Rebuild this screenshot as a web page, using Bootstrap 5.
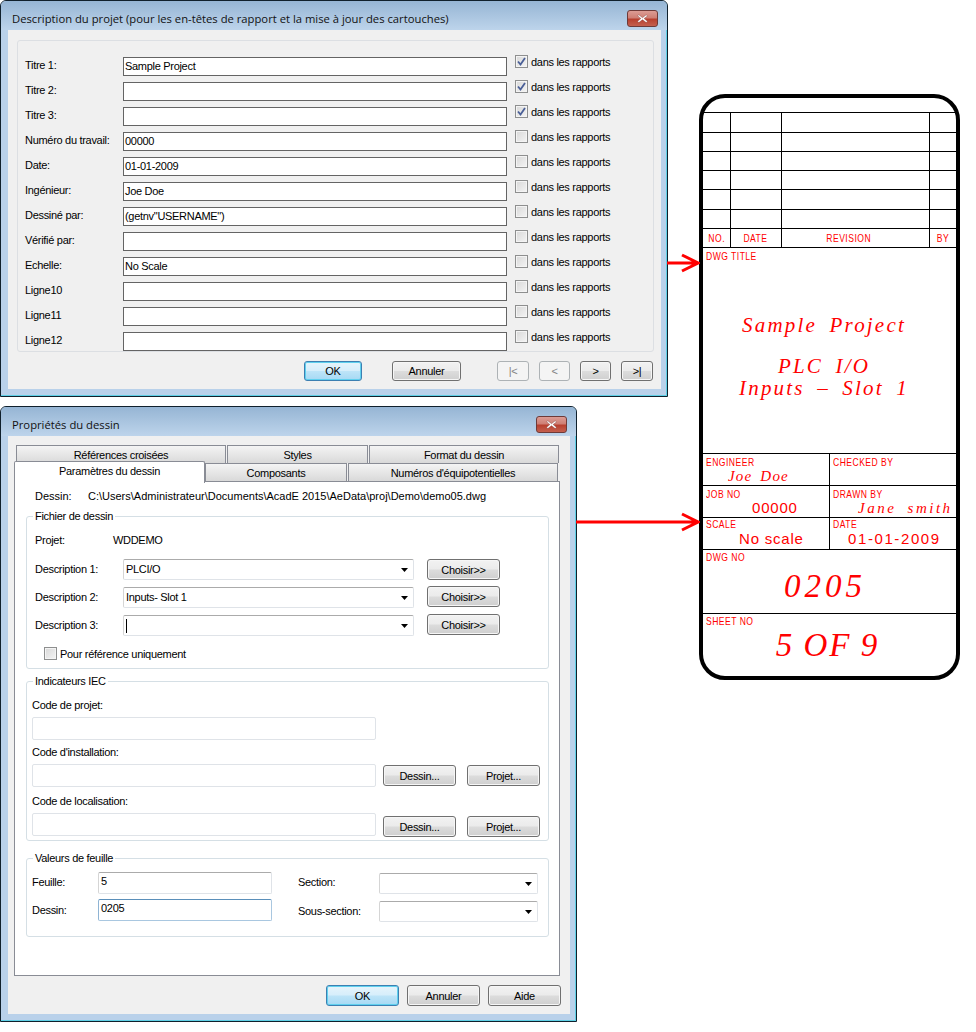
<!DOCTYPE html>
<html lang="fr">
<head>
  <meta charset="UTF-8" />
  <title>Description du projet</title>
  <meta name="viewport" content="width=device-width, initial-scale=1" />
  <link href="https://cdn.jsdelivr.net/npm/bootstrap@5.3.0/dist/css/bootstrap.min.css" rel="stylesheet" />
  <style>
    body {
      background: #fff;
      color: #000;
      font-family: "Liberation Sans", Arial, sans-serif;
      font-size: 11px;
      line-height: 14px;
      letter-spacing: -.3px;
      position: relative;
      width: 976px;
      height: 1032px;
      overflow: hidden;
    }

    /* windows on the desktop */
    .dlg {
      position: absolute;
      left: 0;
      background: #b9d1ea;
      border: 1px solid #10202c;
      border-radius: 6px 6px 0 0;
      box-shadow: inset -1px -1px 0 #5fd0e6;
      display: flex;
      flex-direction: column;
    }
    .dlg-a { top: 0; width: 668px; height: 397px; }
    .dlg-b { top: 406px; width: 577px; height: 616px; }

    .dlg-title {
      height: 29px;
      flex: none;
      display: flex;
      align-items: flex-start;
      justify-content: space-between;
      padding: 9px 9px 0 11px;
      background: linear-gradient(#96b5d4, #bdd4eb);
      border-radius: 5px 5px 0 0;
      font-family: "Open Sans", sans-serif;
      font-size: 11.25px;
      line-height: 17px;
      letter-spacing: 0;
      color: #111;
    }
    .close-x {
      width: 31px;
      height: 17px;
      border: 1px solid #6e3a38;
      border-radius: 3px;
      background: linear-gradient(#dc9c94 0, #cf7f75 45%, #b8402f 55%, #c4604f 100%);
      display: flex;
      align-items: center;
      justify-content: center;
    }

    .dlg-body {
      flex: 1;
      margin: 0 6px 7px 7px;
      background: #f0f0f0;
    }
    .dlg-a .dlg-body { padding: 10px 7px 0 9px; }

    .panel-a {
      height: 312px;
      border: 1px solid #dcdfe3;
      border-radius: 3px;
      padding: 16px 0 0 7px;
      display: flex;
      flex-direction: column;
      gap: 6px;
    }
    .row-a { display: flex; height: 19px; }
    .row-a label { width: 98px; line-height: 17px; flex: none; }
    .row-a .fld-a { width: 384px; flex: none; margin-right: 8px; }
    .fld-a {
      height: 19px;
      border: 1px solid #646464;
      background: #fff;
      padding-left: 1px;
      line-height: 17px;
    }
    .chk-line { display: flex; align-items: center; height: 13px; margin-top: -2px; gap: 3px; }
    .chk-box {
      width: 13px;
      height: 13px;
      flex: none;
      border: 1px solid #8e8f8f;
      background: linear-gradient(135deg, #d8d8d8, #f4f4f4);
      box-shadow: inset 0 0 0 1px #f4f4f4;
      display: flex;
      align-items: center;
      justify-content: center;
    }

    /* win7 push buttons */
    .btn-win {
      height: 21px;
      padding: 0;
      border: 1px solid #707070;
      border-radius: 3px;
      background: linear-gradient(#f2f2f2 0, #ebebeb 48%, #dcdcdc 52%, #cfcfcf 100%);
      color: #000;
      font-size: 11px;
      line-height: 18px;
      letter-spacing: -.3px;
      box-shadow: inset 0 0 0 1px #f6f6f6;
      flex: none;
    }
    .btn-win:hover { background: linear-gradient(#f2f2f2 0, #ebebeb 48%, #dcdcdc 52%, #cfcfcf 100%); color: #000; border-color: #707070; }
    .btn-win.is-default {
      border-color: #3c7fb1;
      background: linear-gradient(#e6f4fb 0, #d6eefb 48%, #bde4f8 52%, #a6d9f4 100%);
      box-shadow: inset 0 0 0 1px #5fd0ee;
    }
    .btn-win.is-off, .btn-win:disabled {
      border-color: #adb2b5;
      background: #f4f4f4;
      color: #838383;
      box-shadow: none;
      opacity: 1;
    }
    .w-31 { width: 31px; }
    .w-32 { width: 32px; }
    .w-58 { width: 58px; }
    .w-69 { width: 69px; }
    .w-73 { width: 73px; }

    .bar-a { display: flex; margin: 9px 0 0 287px; height: 20px; }
    .bar-a .btn-win { height: 20px; }
    .bar-a .gap-30 { margin-left: 30px; }
    .bar-a .gap-36 { margin-left: 36px; }
    .bar-a .gap-10 { margin-left: 10px; }

    /* tabs */
    .tabs-b { padding: 9px 0 0 6px; }
    .tab-row { display: flex; height: 18px; }
    .tab-row.top-row { padding-left: 2px; gap: 1px; }
    .tab-win {
      border: 1px solid #898c95;
      border-bottom: 0;
      background: linear-gradient(#f4f4f4, #d9d9d9);
      text-align: center;
      line-height: 19px;
      height: 18px;
      flex: none;
    }
    .tab-win.on {
      background: #fff;
      height: 22px;
      margin-top: -2px;
      position: relative;
      z-index: 2;
      line-height: 19px;
      border-radius: 2px 2px 0 0;
    }
    .t-a { width: 210px; }
    .t-b { width: 141px; }
    .t-c { width: 190px; }
    .t-d { width: 191px; }
    .t-e { width: 142px; }
    .t-f { width: 210px; margin-left: 1px; }

    .panel-b {
      height: 495px;
      margin-left: 6px;
      width: 546px;
      background: #fff;
      border: 1px solid #898c95;
      padding: 6px 10px 0 11px;
      position: relative;
    }
    .path-line { display: flex; height: 16px; line-height: 16px; padding-left: 9px; margin-bottom: 5px; letter-spacing: 0; }
    .path-line span:first-child { width: 53px; flex: none; }

    /* group boxes */
    .grp {
      width: 523px;
      border: 1px solid #d5dfe5;
      border-radius: 3px;
      padding: 0;
      margin: 0;
      min-width: 0;
    }
    .grp legend {
      float: none;
      width: auto;
      margin: 0 0 0 6px;
      padding: 0 2px;
      font-size: 11px;
      line-height: 14px;
    }
    .grp-1 { height: 160px; }
    .grp-2 { height: 167px; margin-top: 5px; }
    .grp-3 { height: 86px; margin-top: 10px; }

    .grp-in-1 { padding: 9px 0 0 8px; }
    .projet-line { display: flex; height: 16px; line-height: 16px; margin-bottom: 11px; }
    .projet-line span:first-child { width: 78px; flex: none; }
    .desc-line { display: flex; align-items: flex-start; height: 21px; margin-bottom: 7px; }
    .desc-line label { width: 88px; line-height: 21px; flex: none; }
    .desc-line .cmb { width: 291px; margin-right: 13px; }
    .nudge-up { margin-top: -1px; }
    .nudge-btn { margin-top: 1px; }
    .nudge-down { margin-top: 3px; }

    .cmb, .txt-b {
      background: #fff;
      border: 1px solid #dfe3e8;
      border-top-color: #ababab;
      border-left-color: #d5d5d5;
      border-radius: 2px;
      padding-left: 2px;
    }
    .cmb {
      height: 21px;
      line-height: 16px;
      display: flex;
      align-items: center;
      justify-content: space-between;
      padding-right: 5px;
      flex: none;
    }
    .cmb span { margin-top: -2px; }
    .cmb svg { flex: none; }
    .caret-bar { display: inline-block; width: 1px; height: 14px; background: #000; margin-top: 0 !important; }
    .ref-line { display: flex; align-items: center; gap: 3px; height: 13px; margin: 11px 0 0 9px; }

    .grp-in-2 { padding: 10px 0 0 5px; }
    .cap-line { line-height: 14px; }
    .lbl-gap-5 { margin-top: 5px; }
    .lbl-gap-7 { margin-top: 7px; }
    .code-line { display: flex; align-items: flex-start; margin-top: 5px; }
    .code-line .txt-b { width: 344px; height: 23px; border-top-color: #dfe3e8; border-left-color: #dfe3e8; flex: none; margin-right: 7px; }
    .code-line .btn-win + .btn-win { margin-left: 11px; }
    .txt-b.only { width: 344px; height: 23px; border-top-color: #dfe3e8; border-left-color: #dfe3e8; margin-top: 5px; }

    .grp-in-3 { display: flex; padding: 7px 0 0 5px; }
    .sheet-col { display: flex; flex-direction: column; gap: 5px; flex: none; }
    .sheet-col.left { width: 266px; }
    .sheet-line { display: flex; height: 22px; }
    .sheet-line label { width: 66px; line-height: 21px; flex: none; }
    .sheet-line label.lab-low { line-height: 23px; }
    .sheet-line .txt-b { width: 174px; height: 22px; line-height: 16px; flex: none; border-top-color: #ababab; }
    .sheet-line .txt-b.focus { border-color: #5a8fba #a9c7e0 #a9c7e0 #8fb4d4; }
    .sheet-col.right { padding-top: 1px; gap: 7px; }
    .sect-line { display: flex; height: 21px; }
    .sect-line label { width: 81px; line-height: 19px; flex: none; }
    .sect-line label.lab-low { line-height: 21px; }
    .sect-line .cmb { width: 159px; }

    .bar-b { display: flex; margin: 9px 0 0 318px; gap: 8px; }

    /* title block drawing */
    .cad {
      position: absolute;
      left: 699px;
      top: 94px;
      width: 261px;
      height: 586px;
      border: 4px solid #000;
      border-radius: 26px;
      padding-top: 14px;
      background: #fff;
      color: #f00;
      letter-spacing: 0;
    }
    .rev-tbl { width: 253px; table-layout: fixed; }
    .rev-tbl td { border: 1px solid #000; padding: 0; height: 19px; text-align: center; }
    .rev-tbl tr td:first-child { border-left: 0; }
    .rev-tbl tr td:last-child { border-right: 0; }
    .rev-tbl tr.tall td { height: 20px; }
    .rev-tbl td.rev-off { padding-right: 13px; }
    .c-no { width: 27px; }
    .c-date { width: 51px; }
    .c-rev { width: 148px; }
    /* the plotter font is narrow: squeeze the sans face */
    .cad-lbl {
      font-family: "Liberation Sans", sans-serif;
      font-size: 11px;
      line-height: 10px;
      letter-spacing: .6px;
      color: #f00;
      white-space: nowrap;
      transform: scaleX(.78);
      transform-origin: left center;
    }
    .rev-tbl .cad-lbl { display: inline-block; transform-origin: center; }

    .cad-title { height: 206px; border-bottom: 1px solid #000; padding: 3px 0 0 3px; }
    .title-txt {
      display: flex;
      flex-direction: column;
      align-items: center;
      margin: 53px 0 0 -3px;
      padding-right: 11px;
    }
    .cad-it {
      font-family: "Liberation Serif", serif;
      font-style: italic;
      color: #f00;
      white-space: nowrap;
    }
    .title-txt .cad-it { font-size: 21px; line-height: 22px; letter-spacing: 2.2px; word-spacing: 5px; }
    .title-txt .lead-gap { margin-top: 19px; }
    .cad-two { display: grid; grid-template-columns: 127px 126px; }
    .cad-cell { height: 32px; border-bottom: 1px solid #000; padding: 3px 0 0 3px; }
    .cad-cell:nth-child(odd) { border-right: 1px solid #000; }
    .cad-cell .cad-lbl { margin-bottom: 1px; }
    .cad-cell.tight { padding-top: 1px; }
    .cad-cell.tight .cad-lbl { margin-bottom: 2px; }
    .cad-cell .cad-it { font-size: 15px; line-height: 16px; letter-spacing: 1.2px; word-spacing: 3px; display: block; }
    .cad-cell .cad-it.wide { letter-spacing: 2.5px; word-spacing: 5px; }
    .cad-plain {
      display: block;
      font-family: "Liberation Sans", sans-serif;
      font-size: 15px;
      line-height: 16px;
      letter-spacing: .8px;
      font-weight: 400;
    }
    .cad-plain.date-txt { letter-spacing: 1.6px; }
    .in-25 { padding-left: 22px; }
    .in-49 { padding-left: 46px; }
    .in-36 { padding-left: 33px; }
    .in-26 { padding-left: 25px; }
    .in-16 { padding-left: 15px; }
    .cad-big { border-bottom: 1px solid #000; padding: 2px 0 0 3px; }
    .cad-big.no-line { border-bottom: 0; }
    .h-64 { height: 64px; }
    .cad-big .cad-it { display: block; text-align: center; font-size: 33px; line-height: 34px; letter-spacing: 4px; margin-top: 7px; padding-right: 12px; }
    .cad-big .sheet-it { word-spacing: -1px; letter-spacing: 2px; margin-top: 2px; padding-right: 7px; }

    .arrow-red { position: absolute; display: block; }
    .arrow-a { left: 667px; top: 253px; }
    .arrow-b { left: 576px; top: 512px; }
  </style>
</head>
<body>

  <!-- Description du projet -->
  <div class="dlg dlg-a">
    <div class="dlg-title">
      <span>Description du projet (pour les en-têtes de rapport et la mise à jour des cartouches)</span>
      <span class="close-x"><svg width="11" height="9" viewBox="0 0 13 11"><path d="M2 1l4.500 3.500L11 1l1.500 1.500L8.500 5.500l4 3.500L11 10.500 6.500 7 2 10.500.5 9l4-3.500-4-3.500z" fill="#fff" stroke="#7a3a36" stroke-width=".5"/></svg></span>
    </div>
    <div class="dlg-body">
      <div class="panel-a" id="rowsA"></div>
      <div class="bar-a">
        <button type="button" class="btn btn-win is-default w-58">OK</button>
        <button type="button" class="btn btn-win w-69 gap-30">Annuler</button>
        <button type="button" class="btn btn-win is-off w-32 gap-36" disabled>|&lt;</button>
        <button type="button" class="btn btn-win is-off w-31 gap-10" disabled>&lt;</button>
        <button type="button" class="btn btn-win w-31 gap-10">&gt;</button>
        <button type="button" class="btn btn-win w-32 gap-10">&gt;|</button>
      </div>
    </div>
  </div>

  <!-- Propriétés du dessin -->
  <div class="dlg dlg-b">
    <div class="dlg-title">
      <span>Propriétés du dessin</span>
      <span class="close-x"><svg width="11" height="9" viewBox="0 0 13 11"><path d="M2 1l4.500 3.500L11 1l1.500 1.500L8.500 5.500l4 3.500L11 10.500 6.500 7 2 10.500.5 9l4-3.500-4-3.500z" fill="#fff" stroke="#7a3a36" stroke-width=".5"/></svg></span>
    </div>
    <div class="dlg-body">
      <div class="tabs-b">
        <div class="tab-row top-row">
          <div class="tab-win t-a">Références croisées</div>
          <div class="tab-win t-b">Styles</div>
          <div class="tab-win t-c">Format du dessin</div>
        </div>
        <div class="tab-row">
          <div class="tab-win t-d on">Paramètres du dessin</div>
          <div class="tab-win t-e">Composants</div>
          <div class="tab-win t-f">Numéros d'équipotentielles</div>
        </div>
      </div>
      <div class="panel-b">
        <div class="path-line"><span>Dessin:</span><span>C:\Users\Administrateur\Documents\AcadE 2015\AeData\proj\Demo\demo05.dwg</span></div>

        <fieldset class="grp grp-1">
          <legend>Fichier de dessin</legend>
          <div class="grp-in-1">
            <div class="projet-line"><span>Projet:</span><span>WDDEMO</span></div>
            <div class="desc-line">
              <label>Description 1:</label>
              <div class="cmb"><span>PLCI/O</span><svg width="7" height="4" viewBox="0 0 7 4"><path d="M0 0h7L3.500 4z"/></svg></div>
              <button type="button" class="btn btn-win w-73">Choisir&gt;&gt;</button>
            </div>
            <div class="desc-line">
              <label>Description 2:</label>
              <div class="cmb"><span>Inputs- Slot 1</span><svg width="7" height="4" viewBox="0 0 7 4"><path d="M0 0h7L3.500 4z"/></svg></div>
              <button type="button" class="btn btn-win w-73 nudge-up">Choisir&gt;&gt;</button>
            </div>
            <div class="desc-line">
              <label>Description 3:</label>
              <div class="cmb"><span class="caret-bar"></span><svg width="7" height="4" viewBox="0 0 7 4"><path d="M0 0h7L3.500 4z"/></svg></div>
              <button type="button" class="btn btn-win w-73 nudge-up">Choisir&gt;&gt;</button>
            </div>
            <div class="ref-line"><span class="chk-box"></span><span>Pour référence uniquement</span></div>
          </div>
        </fieldset>

        <fieldset class="grp grp-2">
          <legend>Indicateurs IEC</legend>
          <div class="grp-in-2">
            <div class="cap-line">Code de projet:</div>
            <div class="txt-b only"></div>
            <div class="cap-line lbl-gap-5">Code d'installation:</div>
            <div class="code-line">
              <div class="txt-b"></div>
              <button type="button" class="btn btn-win w-73 nudge-btn">Dessin...</button>
              <button type="button" class="btn btn-win w-73 nudge-btn">Projet...</button>
            </div>
            <div class="cap-line lbl-gap-7">Code de localisation:</div>
            <div class="code-line">
              <div class="txt-b"></div>
              <button type="button" class="btn btn-win w-73 nudge-down">Dessin...</button>
              <button type="button" class="btn btn-win w-73 nudge-down">Projet...</button>
            </div>
          </div>
        </fieldset>

        <fieldset class="grp grp-3">
          <legend>Valeurs de feuille</legend>
          <div class="grp-in-3">
            <div class="sheet-col left">
              <div class="sheet-line"><label>Feuille:</label><div class="txt-b">5</div></div>
              <div class="sheet-line"><label class="lab-low">Dessin:</label><div class="txt-b focus">0205</div></div>
            </div>
            <div class="sheet-col right">
              <div class="sect-line"><label>Section:</label><div class="cmb"><span></span><svg width="7" height="4" viewBox="0 0 7 4"><path d="M0 0h7L3.500 4z"/></svg></div></div>
              <div class="sect-line"><label class="lab-low">Sous-section:</label><div class="cmb"><span></span><svg width="7" height="4" viewBox="0 0 7 4"><path d="M0 0h7L3.500 4z"/></svg></div></div>
            </div>
          </div>
        </fieldset>
      </div>
      <div class="bar-b">
        <button type="button" class="btn btn-win is-default w-73">OK</button>
        <button type="button" class="btn btn-win w-73">Annuler</button>
        <button type="button" class="btn btn-win w-73">Aide</button>
      </div>
    </div>
  </div>

  <!-- Cartouche -->
  <div class="cad">
    <table class="rev-tbl">
      <colgroup><col class="c-no" /><col class="c-date" /><col class="c-rev" /><col /></colgroup>
      <tbody>
        <tr class="tall"><td></td><td></td><td></td><td></td></tr>
        <tr><td></td><td></td><td></td><td></td></tr>
        <tr><td></td><td></td><td></td><td></td></tr>
        <tr><td></td><td></td><td></td><td></td></tr>
        <tr class="tall"><td></td><td></td><td></td><td></td></tr>
        <tr><td></td><td></td><td></td><td></td></tr>
        <tr>
          <td><span class="cad-lbl">NO.</span></td><td><span class="cad-lbl">DATE</span></td><td class="rev-off"><span class="cad-lbl">REVISION</span></td><td><span class="cad-lbl">BY</span></td>
        </tr>
      </tbody>
    </table>
    <div class="cad-title">
      <div class="cad-lbl">DWG TITLE</div>
      <div class="title-txt">
        <span class="cad-it">Sample Project</span>
        <span class="cad-it lead-gap">PLC I/O</span>
        <span class="cad-it">Inputs – Slot 1</span>
      </div>
    </div>
    <div class="cad-two">
      <div class="cad-cell"><div class="cad-lbl">ENGINEER</div><span class="cad-it in-25">Joe Doe</span></div>
      <div class="cad-cell"><div class="cad-lbl">CHECKED BY</div></div>
      <div class="cad-cell"><div class="cad-lbl">JOB NO</div><span class="cad-plain in-49">00000</span></div>
      <div class="cad-cell"><div class="cad-lbl">DRAWN BY</div><span class="cad-it wide in-26">Jane smith</span></div>
      <div class="cad-cell tight"><div class="cad-lbl">SCALE</div><span class="cad-plain in-36">No scale</span></div>
      <div class="cad-cell tight"><div class="cad-lbl">DATE</div><span class="cad-plain date-txt in-16">01-01-2009</span></div>
    </div>
    <div class="cad-big h-64"><div class="cad-lbl">DWG NO</div><span class="cad-it">0205</span></div>
    <div class="cad-big no-line"><div class="cad-lbl">SHEET NO</div><span class="cad-it sheet-it">5 OF 9</span></div>
  </div>

  <!-- Flèches -->
  <svg class="arrow-red arrow-a" width="33" height="20" viewBox="0 0 33 20"><path d="M0 10h30M15 2l16 8-16 8" fill="none" stroke="#f00" stroke-width="3"/></svg>
  <svg class="arrow-red arrow-b" width="124" height="20" viewBox="0 0 124 20"><path d="M0 10h121M106 2l16 8-16 8" fill="none" stroke="#f00" stroke-width="3"/></svg>

  <script src="https://cdn.jsdelivr.net/npm/bootstrap@5.3.0/dist/js/bootstrap.bundle.min.js"></script>
  <script>
    const rowsA = [
      ["Titre 1:", "Sample Project", true],
      ["Titre 2:", "", true],
      ["Titre 3:", "", true],
      ["Numéro du travail:", "00000", false],
      ["Date:", "01-01-2009", false],
      ["Ingénieur:", "Joe Doe", false],
      ["Dessiné par:", '(getnv"USERNAME")', false],
      ["Vérifié par:", "", false],
      ["Echelle:", "No Scale", false],
      ["Ligne10", "", false],
      ["Ligne11", "", false],
      ["Ligne12", "", false]
    ];
    const tick = '<svg width="9" height="9" viewBox="0 0 9 9"><path d="M1 4.500l2.500 3L8 1" fill="none" stroke="#4a5f97" stroke-width="1.800"/></svg>';

    document.getElementById("rowsA").innerHTML = rowsA.map(r => `
      <div class="row-a">
        <label>${r[0]}</label>
        <div class="fld-a">${r[1]}</div>
        <div class="chk-line"><span class="chk-box">${r[2] ? tick : ""}</span><span>dans les rapports</span></div>
      </div>`).join("");
  </script>
</body>
</html>
